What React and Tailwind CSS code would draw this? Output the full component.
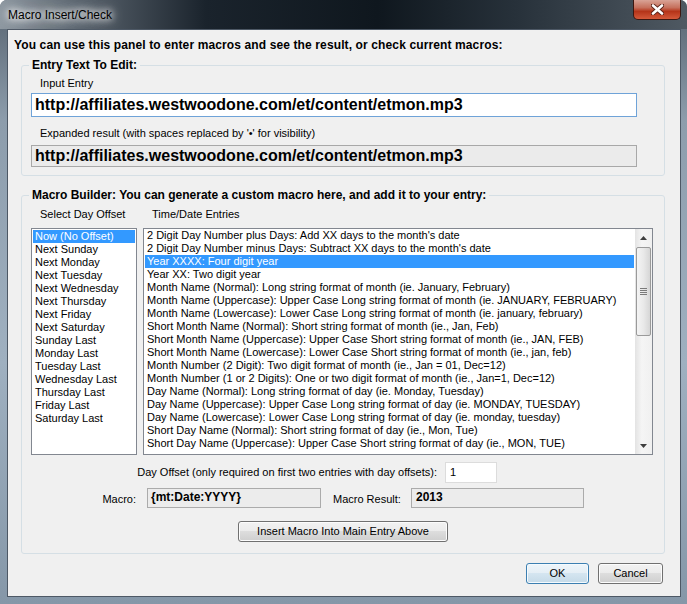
import React from "react";

const dayOffsets = [
  "Now (No Offset)",
  "Next Sunday",
  "Next Monday",
  "Next Tuesday",
  "Next Wednesday",
  "Next Thursday",
  "Next Friday",
  "Next Saturday",
  "Sunday Last",
  "Monday Last",
  "Tuesday Last",
  "Wednesday Last",
  "Thursday Last",
  "Friday Last",
  "Saturday Last",
];

const entries = [
  "2 Digit Day Number plus Days: Add XX days to the month's date",
  "2 Digit Day Number minus Days: Subtract XX days to the month's date",
  "Year XXXX: Four digit year",
  "Year XX: Two digit year",
  "Month Name (Normal): Long string format of month (ie. January, February)",
  "Month Name (Uppercase): Upper Case Long string format of month (ie. JANUARY, FEBRUARY)",
  "Month Name (Lowercase): Lower Case Long string format of month (ie. january, february)",
  "Short Month Name (Normal): Short string format of month (ie., Jan, Feb)",
  "Short Month Name (Uppercase): Upper Case Short string format of month (ie., JAN, FEB)",
  "Short Month Name (Lowercase): Lower Case Short string format of month (ie., jan, feb)",
  "Month Number (2 Digit): Two digit format of month (ie., Jan = 01, Dec=12)",
  "Month Number (1 or 2 Digits): One or two digit format of month (ie., Jan=1, Dec=12)",
  "Day Name (Normal): Long string format of day (ie. Monday, Tuesday)",
  "Day Name (Uppercase): Upper Case Long string format of day (ie. MONDAY, TUESDAY)",
  "Day Name (Lowercase): Lower Case Long string format of day (ie. monday, tuesday)",
  "Short Day Name (Normal): Short string format of day (ie., Mon, Tue)",
  "Short Day Name (Uppercase): Upper Case Short string format of day (ie., MON, TUE)",
];

const url = "http://affiliates.westwoodone.com/et/content/etmon.mp3";

// win7 style push button
const Button = ({ children, width, isDefault }) => (
  <div
    className={
      isDefault
        ? "h-[21px] flex items-center justify-center rounded-[3px] border border-[#3c7fb1] shadow-[inset_0_0_0_1px_#f4fafe] bg-[linear-gradient(180deg,#eef5fa_0%,#e4eef5_50%,#d4e5f0_50%,#c5dae8_100%)]"
        : "h-[21px] flex items-center justify-center rounded-[3px] border border-[#707070] shadow-[inset_0_0_0_1px_#fcfcfc] bg-[linear-gradient(180deg,#f2f2f2_0%,#ebebeb_50%,#dddddd_50%,#cfcfcf_100%)]"
    }
    style={{ width }}
  >
    {children}
  </div>
);

const Arrow = ({ down }) => (
  <svg width="7" height="4" viewBox="0 0 7 4">
    <path d={down ? "M0 0 L7 0 L3.5 4 Z" : "M0 4 L7 4 L3.5 0 Z"} fill="#3f3f3f" />
  </svg>
);

const ScrollBar = () => (
  <div className="w-[17px] h-full flex flex-col bg-[linear-gradient(90deg,#e3e3e3,#f5f5f5_40%,#f0f0f0)]">
    <div className="h-[17px] flex items-center justify-center">
      <Arrow />
    </div>
    <div className="mx-[1px] mt-[1px] h-[89px] rounded-[2px] border border-[#9a9a9a] bg-[linear-gradient(90deg,#f4f4f4_0%,#e9e9e9_50%,#d6d6d6_100%)] flex flex-col items-center justify-center gap-[1px]">
      <div className="w-[7px] h-[1px] bg-[#7a7a7a]" />
      <div className="w-[7px] h-[1px] bg-[#7a7a7a]" />
      <div className="w-[7px] h-[1px] bg-[#7a7a7a]" />
      <div className="w-[7px] h-[1px] bg-[#7a7a7a]" />
    </div>
    <div className="flex-1" />
    <div className="h-[17px] flex items-center justify-center">
      <Arrow down />
    </div>
  </div>
);

export default function App() {
  return (
    <div className="w-[687px] h-[604px] overflow-hidden rounded-t-[7px] bg-[linear-gradient(180deg,#56626e_0%,#8d9dac_20%,#9fb0c0_60%,#8597a8_100%)] font-['Liberation_Sans',Arial,sans-serif] text-[11px] text-black">
      {/* title bar */}
      <div className="h-[29px] flex items-start bg-[linear-gradient(90deg,#8e98a1_0%,#59636d_12%,#1a232c_30%,#0f171e_55%,#27313a_75%,#4f5962_100%)]">
        <div className="pl-[8px] pt-[7px] text-[12px] leading-[16px] [text-shadow:0_0_6px_#fff,0_0_10px_#fff,0_0_14px_#fff]">
          Macro Insert/Check
        </div>
        <div className="ml-auto mr-[6px] w-[48px] h-[20px] rounded-b-[5px] border border-t-0 border-[#3d1710] bg-[linear-gradient(180deg,#d9a396_0%,#c6705c_40%,#b53419_60%,#d4593a_100%)] flex items-center justify-center">
          <svg width="13" height="11" viewBox="0 0 13 11">
            <path d="M2 1.5 L11 9.5 M11 1.5 L2 9.5" stroke="#5a2218" strokeWidth="4.4" strokeLinecap="round" />
            <path d="M2 1.5 L11 9.5 M11 1.5 L2 9.5" stroke="#ffffff" strokeWidth="2.6" strokeLinecap="round" />
          </svg>
        </div>
      </div>

      {/* client area */}
      <div className="ml-[7px] w-[674px] h-[568px] border border-[#4d5865] bg-[#f0f0f0]">
        <div className="pl-[6px] pt-[8px] font-bold text-[12px] tracking-[0.12px] leading-[15px]">
          You can use this panel to enter macros and see the result, or check current macros:
        </div>

        <fieldset className="ml-[13px] mt-[5px] w-[644px] border border-[#d5dfe5] rounded-[3px] pb-[8px]">
          <legend className="ml-[7px] px-[3px] font-bold text-[12px] leading-[14px]">Entry Text To Edit:</legend>
          <div className="pl-[18px] mt-[4px] leading-[14px]">Input Entry</div>
          <div className="ml-[9px] mt-[3px] w-[606px] h-[24px] bg-white border border-[#6fa3d8] px-[3px] flex items-center font-bold text-[16px] leading-[20px]">
            {url}
          </div>
          <div className="pl-[18px] mt-[9px] leading-[14px]">
            Expanded result (with spaces replaced by '•' for visibility)
          </div>
          <div className="ml-[9px] mt-[5px] w-[606px] h-[22px] bg-[#ebebeb] border border-[#a8a8a8] px-[3px] flex items-center font-bold text-[16px] leading-[20px]">
            {url}
          </div>
        </fieldset>

        <fieldset className="ml-[13px] mt-[12px] w-[644px] border border-[#d5dfe5] rounded-[3px] pb-[11px]">
          <legend className="ml-[7px] px-[3px] font-bold text-[12px] leading-[14px]">
            Macro Builder: You can generate a custom macro here, and add it to your entry:
          </legend>
          <div className="flex pl-[18px] mt-[5px] leading-[14px]">
            <span className="w-[112px]">Select Day Offset</span>
            <span>Time/Date Entries</span>
          </div>
          <div className="flex ml-[9px] mt-[7px] h-[227px] gap-[6px]">
            <div className="w-[106px] h-full bg-white border border-[#828790] pt-[1px] px-[1px]">
              {dayOffsets.map((d, i) => (
                <div
                  key={d}
                  className={
                    i === 0
                      ? "h-[13px] leading-[13px] pl-[2px] bg-[#3399ff] text-white"
                      : "h-[13px] leading-[13px] pl-[2px]"
                  }
                >
                  {d}
                </div>
              ))}
            </div>
            <div className="w-[510px] h-full bg-white border border-[#828790] flex">
              <div className="flex-1 pl-[1px] pr-[1px] overflow-hidden">
                {entries.map((e, i) => (
                  <div
                    key={e}
                    className={
                      i === 2
                        ? "h-[13px] leading-[13px] pl-[2px] whitespace-nowrap bg-[#3399ff] text-white"
                        : "h-[13px] leading-[13px] pl-[2px] whitespace-nowrap"
                    }
                  >
                    {e}
                  </div>
                ))}
              </div>
              <ScrollBar />
            </div>
          </div>

          <div className="flex items-center mt-[7px] h-[21px]">
            <span className="w-[415px] text-right">
              Day Offset (only required on first two entries with day offsets):
            </span>
            <div className="ml-[8px] w-[52px] h-[21px] bg-white border border-[#dcdcdc] flex items-center pl-[4px]">
              1
            </div>
          </div>

          <div className="flex items-start mt-[5px] h-[20px]">
            <span className="w-[114px] text-right pt-[4px] leading-[14px]">Macro:</span>
            <div className="ml-[11px] w-[174px] h-[20px] bg-[#ececec] border border-[#ababab] pl-[3px] pt-[1px] font-bold text-[12px] leading-[14px]">
              {"{mt:Date:YYYY}"}
            </div>
            <span className="ml-[12px] w-[78px] pt-[4px] leading-[14px]">Macro Result:</span>
            <div className="w-[173px] h-[20px] bg-[#ececec] border border-[#ababab] pl-[4px] pt-[1px] font-bold text-[12px] leading-[14px]">
              2013
            </div>
          </div>

          <div className="flex justify-center mt-[13px]">
            <Button width="210px">Insert Macro Into Main Entry Above</Button>
          </div>
        </fieldset>

        <div className="flex justify-end gap-[9px] pr-[17px] mt-[9px]">
          <Button width="63px" isDefault>
            OK
          </Button>
          <Button width="65px">Cancel</Button>
        </div>
      </div>
    </div>
  );
}
